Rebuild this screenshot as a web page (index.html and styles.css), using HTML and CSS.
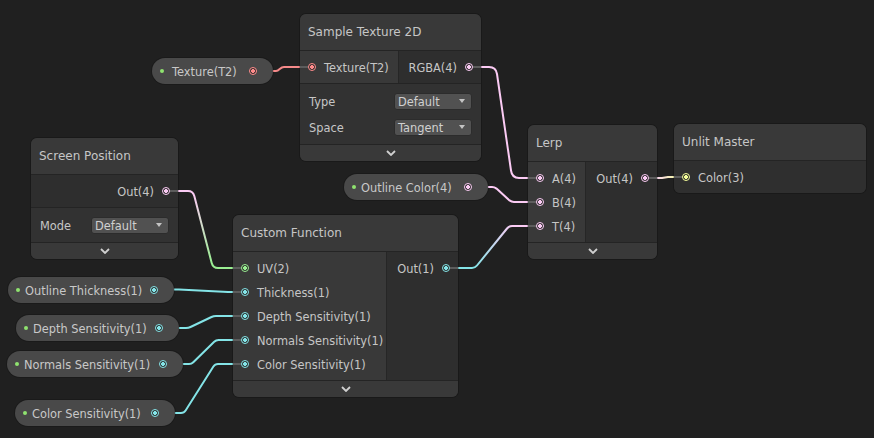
FILE: index.html
```html
<!DOCTYPE html>
<html lang="en">
<head>
<meta charset="utf-8">
<title>Shader Graph</title>
<link rel="stylesheet" href="styles.css">
</head>
<body>
<div class="graph">
  <svg class="wires" width="874" height="438" viewBox="0 0 874 438">
    <defs>
      <linearGradient id="g-uv" gradientUnits="userSpaceOnUse" x1="0" y1="195" x2="0" y2="264">
        <stop offset="0" stop-color="#fbcbf4"/>
        <stop offset="1" stop-color="#9aef92"/>
      </linearGradient>
      <linearGradient id="g-t" gradientUnits="userSpaceOnUse" x1="474" y1="0" x2="512" y2="0">
        <stop offset="0" stop-color="#84e4e7"/>
        <stop offset="1" stop-color="#fbcbf4"/>
      </linearGradient>
      <linearGradient id="g-col" gradientUnits="userSpaceOnUse" x1="657" y1="0" x2="674" y2="0">
        <stop offset="0" stop-color="#fbd8ee"/>
        <stop offset="1" stop-color="#f6f3b0"/>
      </linearGradient>
    </defs>
    <path class="wire w-tex" d="M273 71 H276 C279.5 71 280 67 284 67 H300"/>
    <path class="wire w-v4" d="M481 67 H489 Q496 67 497 74 L511 170.5 Q512 178 519 178 H528"/>
    <path class="wire w-v4" d="M488 187 H492 Q494.5 187 496.5 188.6 L509.5 200.4 Q511.5 202 514 202 H528"/>
    <path class="wire" stroke="url(#g-t)" d="M458 268 H472 Q475 268 477 265.5 L507 228.5 Q509 226 512 226 H528"/>
    <path class="wire" stroke="url(#g-uv)" d="M178 191 H188 Q193 191 194.3 196 L211.7 263 Q213 268 218 268 H233"/>
    <path class="wire" stroke="url(#g-col)" d="M657 178 H662 L668 177 H674"/>
    <path class="wire w-v1" d="M174 289.5 H179 L228 292 H233"/>
    <path class="wire w-v1" d="M179 328 H186 Q188.5 328 190.5 327 L211.5 317 Q213.5 316 216 316 H233"/>
    <path class="wire w-v1" d="M183 364 H189 Q191.5 364 193.3 362.2 L214.2 341.8 Q216 340 218.5 340 H233"/>
    <path class="wire w-v1" d="M175 413 H181 Q184 413 185.6 410.5 L213.4 366.5 Q215 364 218 364 H233"/>
  </svg>

  <!-- Property pills -->
  <div class="pill p-texture"><span class="live"></span><span class="label">Texture(T2)</span><span class="dot tex"></span></div>
  <div class="pill p-color4"><span class="live"></span><span class="label">Outline Color(4)</span><span class="dot v4"></span></div>
  <div class="pill p-thick"><span class="live"></span><span class="label">Outline Thickness(1)</span><span class="dot v1"></span></div>
  <div class="pill p-depth"><span class="live"></span><span class="label">Depth Sensitivity(1)</span><span class="dot v1"></span></div>
  <div class="pill p-normals"><span class="live"></span><span class="label">Normals Sensitivity(1)</span><span class="dot v1"></span></div>
  <div class="pill p-colsens"><span class="live"></span><span class="label">Color Sensitivity(1)</span><span class="dot v1"></span></div>

  <!-- Sample Texture 2D -->
  <div class="node n-sample">
    <div class="node-title">Sample Texture 2D</div>
    <div class="node-ports">
      <div class="inputs">
        <div class="port in"><span class="dot tex"></span><span class="label">Texture(T2)</span></div>
      </div>
      <div class="outputs">
        <div class="port out"><span class="label">RGBA(4)</span><span class="dot v4"></span></div>
      </div>
    </div>
    <div class="node-settings">
      <div class="setting"><span class="label">Type</span><span class="dropdown">Default</span></div>
      <div class="setting"><span class="label">Space</span><span class="dropdown">Tangent</span></div>
    </div>
    <div class="node-footer"><svg class="chevron" width="10" height="6" viewBox="0 0 10 6"><polyline points="1,1 5,5 9,1"/></svg></div>
  </div>

  <!-- Screen Position -->
  <div class="node n-screen">
    <div class="node-title">Screen Position</div>
    <div class="node-ports">
      <div class="outputs">
        <div class="port out"><span class="label">Out(4)</span><span class="dot v4"></span></div>
      </div>
    </div>
    <div class="node-settings">
      <div class="setting"><span class="label">Mode</span><span class="dropdown">Default</span></div>
    </div>
    <div class="node-footer"><svg class="chevron" width="10" height="6" viewBox="0 0 10 6"><polyline points="1,1 5,5 9,1"/></svg></div>
  </div>

  <!-- Custom Function -->
  <div class="node n-custom">
    <div class="node-title">Custom Function</div>
    <div class="node-ports">
      <div class="inputs">
        <div class="port in"><span class="dot v2"></span><span class="label">UV(2)</span></div>
        <div class="port in"><span class="dot v1"></span><span class="label">Thickness(1)</span></div>
        <div class="port in"><span class="dot v1"></span><span class="label">Depth Sensitivity(1)</span></div>
        <div class="port in"><span class="dot v1"></span><span class="label">Normals Sensitivity(1)</span></div>
        <div class="port in"><span class="dot v1"></span><span class="label">Color Sensitivity(1)</span></div>
      </div>
      <div class="outputs">
        <div class="port out"><span class="label">Out(1)</span><span class="dot v1"></span></div>
      </div>
    </div>
    <div class="node-footer"><svg class="chevron" width="10" height="6" viewBox="0 0 10 6"><polyline points="1,1 5,5 9,1"/></svg></div>
  </div>

  <!-- Lerp -->
  <div class="node n-lerp">
    <div class="node-title">Lerp</div>
    <div class="node-ports">
      <div class="inputs">
        <div class="port in"><span class="dot v4"></span><span class="label">A(4)</span></div>
        <div class="port in"><span class="dot v4"></span><span class="label">B(4)</span></div>
        <div class="port in"><span class="dot v4"></span><span class="label">T(4)</span></div>
      </div>
      <div class="outputs">
        <div class="port out"><span class="label">Out(4)</span><span class="dot v4"></span></div>
      </div>
    </div>
    <div class="node-footer"><svg class="chevron" width="10" height="6" viewBox="0 0 10 6"><polyline points="1,1 5,5 9,1"/></svg></div>
  </div>

  <!-- Unlit Master -->
  <div class="node n-unlit">
    <div class="node-title">Unlit Master</div>
    <div class="node-ports">
      <div class="inputs master">
        <div class="port in"><span class="dot v3"></span><span class="label">Color(3)</span></div>
      </div>
    </div>
  </div>
</div>
</body>
</html>
```

FILE: styles.css
```css
html, body {
  margin: 0;
  padding: 0;
  background: #202020;
}

body {
  font-family: "DejaVu Sans", Verdana, sans-serif;
  color: #c6c6c6;
  font-size: 11.4px;
}

.graph {
  position: relative;
  width: 874px;
  height: 438px;
  overflow: hidden;
  background: #202020;
}

.wires {
  position: absolute;
  left: 0;
  top: 0;
}

.wire {
  fill: none;
  stroke-width: 2;
  stroke-linecap: round;
  stroke-linejoin: round;
}

.w-tex { stroke: #f58a8a; }
.w-v4 { stroke: #fbcbf4; }
.w-v1 { stroke: #84e4e7; }

/* ---------- port dots ---------- */
.dot {
  --c: #fbcbf4;
  position: relative;
  flex: none;
  width: 8px;
  height: 8px;
  box-sizing: border-box;
  border-radius: 50%;
  border: 1.5px solid var(--c);
  background: radial-gradient(circle, var(--c) 0 1.6px, #2b2b2b 2.2px);
}

.dot.tex { --c: #ff8b8b; }
.dot.v4 { --c: #fbcbf4; }
.dot.v3 { --c: #f6ff9a; }
.dot.v2 { --c: #9aef92; }
.dot.v1 { --c: #84e4e7; }

/* connection stubs between node edge and port */
.port.in .dot::before,
.port.out .dot::before {
  content: "";
  position: absolute;
  top: 1.5px;
  width: 8px;
  height: 2px;
  background: #5c5c5c;
}

.port.in .dot::before { left: -9.5px; }
.port.out .dot::before { left: 6.5px; }

.port .label,
.pill .label {
  padding-top: 2px;
}

/* ---------- property pills ---------- */
.pill {
  position: absolute;
  height: 26px;
  box-sizing: border-box;
  border-radius: 13px;
  background: #494949;
  box-shadow: 0 0 0 1px rgba(0, 0, 0, 0.18);
  display: flex;
  align-items: center;
  padding: 0 16px 0 8px;
  color: #c8c8c8;
  white-space: nowrap;
}

.pill .live {
  flex: none;
  width: 4px;
  height: 4px;
  border-radius: 50%;
  background: #8fe36f;
  margin-right: 5px;
}

.pill .label {
  flex: 1 1 auto;
}

.pill .dot {
  margin-left: 8px;
}

.p-texture { left: 152px; top: 58px; width: 121px; }
.p-texture .live { margin-right: 8px; }
.p-color4 { left: 344px; top: 174px; width: 144px; }
.p-thick { left: 8px; top: 277px; width: 166px; }
.p-depth { left: 16px; top: 315px; width: 163px; }
.p-normals { left: 7px; top: 351px; width: 176px; }
.p-colsens { left: 15px; top: 400px; width: 160px; }

/* ---------- nodes ---------- */
.node {
  position: absolute;
  border-radius: 6px;
  overflow: hidden;
  box-shadow: 0 0 0 1px rgba(0, 0, 0, 0.22);
  background: #2e2e2e;
}

.n-sample { left: 300px; top: 14px; width: 181px; }
.n-screen { left: 31px; top: 138px; width: 147px; }
.n-custom { left: 233px; top: 215px; width: 225px; }
.n-lerp { left: 528px; top: 125px; width: 129px; }
.n-unlit { left: 674px; top: 124px; width: 192px; }

.node-title {
  height: 36px;
  line-height: 36px;
  padding-left: 8px;
  font-size: 12px;
  background: #393939;
  border-bottom: 1px solid #242424;
  white-space: nowrap;
}

.node-ports {
  display: flex;
}

.inputs {
  flex: none;
  box-sizing: border-box;
  padding: 4px 0;
  background: #393939;
  border-right: 1px solid #262626;
}

.n-sample .inputs { width: 99px; }
.n-custom .inputs { width: 154px; }
.n-lerp .inputs { width: 58px; }

.inputs.master {
  flex: 1;
  border-right: 0;
  background: #2f2f2f;
}

.outputs {
  flex: 1;
  padding: 4px 0;
  background: #2e2e2e;
}

.port {
  height: 24px;
  display: flex;
  align-items: center;
  gap: 8px;
  white-space: nowrap;
}

.port.in { padding-left: 8px; }
.port.out { justify-content: flex-end; padding-right: 8px; }

.node-settings {
  border-top: 1px solid #242424;
  background: #323232;
  padding: 4px 0;
}

.setting {
  height: 26px;
  display: flex;
  align-items: center;
  padding: 0 9px;
}

.setting .label {
  padding-top: 1px;
}

.dropdown {
  position: relative;
  margin-left: auto;
  width: 78px;
  height: 17px;
  box-sizing: border-box;
  display: flex;
  align-items: center;
  padding: 1px 0 0 3px;
  background: #515151;
  border: 1px solid #2c2c2c;
  border-radius: 3px;
  color: #d0d0d0;
}

.dropdown::after {
  content: "";
  position: absolute;
  right: 6px;
  top: 5px;
  border-left: 3.5px solid transparent;
  border-right: 3.5px solid transparent;
  border-top: 4px solid #c4c4c4;
}

.node-footer {
  height: 16px;
  border-top: 1px solid #242424;
  background: #393939;
  display: flex;
  align-items: center;
  justify-content: center;
}

.chevron polyline {
  fill: none;
  stroke: #d0d0d0;
  stroke-width: 1.8;
}
```
